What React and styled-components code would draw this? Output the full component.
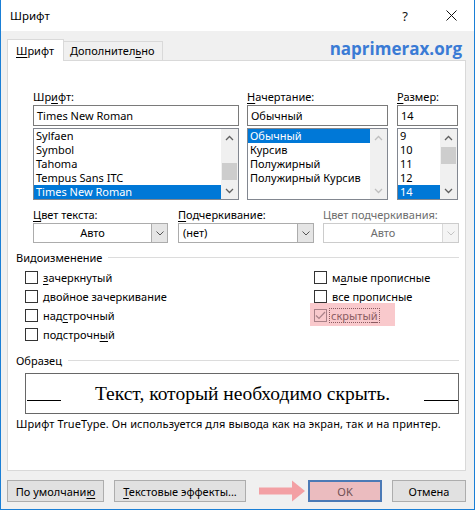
import React from 'react';
import styled, { createGlobalStyle, css } from 'styled-components';

const GlobalStyle = createGlobalStyle`
  html, body {
    margin: 0;
    padding: 0;
    background: #fff;
  }
  body {
    font-family: 'Noto Sans', 'Liberation Sans', sans-serif;
    font-size: 11px;
    color: #000;
  }
  * {
    box-sizing: border-box;
  }
`;

const Window = styled.div`
  width: 475px;
  height: 510px;
  display: flex;
  flex-direction: column;
  border: 1px solid #1a7fd6;
  border-top: none;
  background: #f0f0f0;
`;

const TitleBar = styled.div`
  flex: none;
  height: 31px;
  display: flex;
  align-items: center;
  padding-left: 9px;
  background: #fff;
  font-size: 11.5px;
`;

const Caption = styled.span`
  flex: 1;
`;

const CaptionButton = styled.span`
  width: 46px;
  height: 31px;
  display: flex;
  align-items: center;
  justify-content: center;
  font-size: 13px;
  color: #111;
`;

const Body = styled.div`
  flex: 1;
  display: flex;
  flex-direction: column;
  padding: 7px 8px 0 6px;
`;

const TabRow = styled.div`
  display: flex;
  align-items: flex-end;
  height: 22px;
`;

const Tab = styled.div`
  position: relative;
  border: 1px solid #d9d9d9;
  border-bottom: none;
  white-space: nowrap;
  ${({ $active }) =>
    $active
      ? css`
          z-index: 1;
          height: 22px;
          margin-bottom: -1px;
          padding: 2px 9px 0 8px;
          background: #fff;
        `
      : css`
          height: 19px;
          margin-left: -1px;
          padding: 0 7px 0 6px;
          background: #f0f0f0;
        `}
  line-height: 18px;
`;

const Watermark = styled.span`
  margin-left: auto;
  margin-right: 4px;
  align-self: center;
  font-family: 'Open Sans', 'Noto Sans', sans-serif;
  font-weight: 700;
  font-size: 17px;
  line-height: 20px;
  color: #3a7bd5;
`;

const Panel = styled.div`
  flex: none;
  height: 411px;
  display: flex;
  flex-direction: column;
  padding: 28px 6px 0 8px;
  background: #fff;
  border: 1px solid #d9d9d9;
`;

const Key = styled.u`
  text-decoration: underline;
  text-underline-offset: 2px;
`;

const FontGrid = styled.div`
  display: grid;
  grid-template-columns: 206px 141px 62px;
  column-gap: 8px;
  margin-left: 17px;
  & > :nth-child(3) {
    margin-left: 1px;
  }
`;

const Column = styled.div`
  display: flex;
  flex-direction: column;
`;

const Label = styled.label`
  display: block;
  line-height: 15px;
  margin-bottom: 1px;
  white-space: nowrap;
  color: ${({ $disabled }) => ($disabled ? '#6d6d6d' : '#000')};
`;

const Field = styled.div`
  height: 21px;
  padding: 0 3px;
  line-height: 19px;
  border: 1px solid #7a7a7a;
  background: #fff;
  white-space: nowrap;
`;

const ListBox = styled.div`
  display: flex;
  height: 72px;
  margin-top: 2px;
  border: 1px solid #828790;
  background: #fff;
`;

const Items = styled.div`
  flex: 1;
  overflow: hidden;
`;

const Item = styled.div`
  height: 14px;
  padding: 0 2px;
  line-height: 14px;
  white-space: nowrap;
  ${({ $selected }) =>
    $selected &&
    css`
      background: #0078d7;
      color: #fff;
    `}
`;

const ScrollBar = styled.div`
  flex: none;
  width: 17px;
  display: flex;
  flex-direction: column;
  background: #f0f0f0;
`;

const ScrollArrow = styled.div`
  height: 17px;
  display: flex;
  align-items: center;
  justify-content: center;
  color: ${({ $disabled }) => ($disabled ? '#bfbfbf' : '#606060')};
`;

const Track = styled.div`
  flex: 1;
`;

const Thumb = styled.div`
  height: 17px;
  margin: ${({ $offset }) => $offset}px 1px 0;
  background: #cdcdcd;
`;

const ComboRow = styled.div`
  display: grid;
  grid-template-columns: 135px 136px 135px;
  column-gap: 10px;
  margin: 7px 0 0 17px;
  & > :nth-child(3) {
    margin-left: -1px;
  }
`;

const Combo = styled.div`
  display: flex;
  height: 20px;
  border: 1px solid ${({ $disabled }) => ($disabled ? '#cccccc' : '#acacac')};
  background: #fff;
  color: ${({ $disabled }) => ($disabled ? '#6d6d6d' : '#000')};
`;

const ComboValue = styled.span`
  flex: 1;
  padding: 0 4px;
  line-height: 18px;
  text-align: ${({ $align }) => $align || 'left'};
`;

const ComboArrow = styled.span`
  width: 16px;
  display: flex;
  align-items: center;
  justify-content: center;
  border-left: 1px solid ${({ $disabled }) => ($disabled ? '#d9d9d9' : '#acacac')};
  background: ${({ $disabled }) => ($disabled ? '#f4f4f4' : '#e5e5e5')};
  color: ${({ $disabled }) => ($disabled ? '#c4c4c4' : '#555')};
`;

const GroupHeading = styled.div`
  display: flex;
  align-items: center;
  gap: 6px;
  margin-top: ${({ $top }) => $top}px;
  line-height: 15px;
  &::after {
    content: '';
    flex: 1;
    border-top: 1px solid #dcdcdc;
  }
`;

const Effects = styled.div`
  display: grid;
  grid-template-columns: 289px 1fr;
  margin-top: 3px;
  padding-left: 9px;
`;

const CheckRow = styled.div`
  display: flex;
  align-items: center;
  gap: 5px;
  height: 19px;
  white-space: nowrap;
  ${({ $marked }) =>
    $marked &&
    css`
      height: 23px;
      width: 85px;
      margin: -3px 0 -1px -4px;
      padding: 2px 0 0 4px;
      background: #f9c9cc;
      color: #8b5c62;
    `}
`;

const Box = styled.span`
  flex: none;
  width: 13px;
  height: 13px;
  display: flex;
  align-items: center;
  justify-content: center;
  border: 1px solid ${({ $marked }) => ($marked ? '#a98188' : '#333')};
  background: ${({ $marked }) => ($marked ? 'transparent' : '#fff')};
  color: #a98188;
`;

const FocusText = styled.span`
  margin-left: -3px;
  padding: 0 2px;
  line-height: 15px;
  outline: 1px dotted #8b5c62;
  outline-offset: -1px;
`;

const Preview = styled.div`
  display: grid;
  grid-template-columns: 35px 1fr 34px;
  height: 41px;
  margin: 5px 0 0 9px;
  border: 1px solid #676767;
`;

const Blank = styled.span`
  align-self: end;
  height: 1px;
  margin: 0 0 12px ${({ $left }) => ($left ? '1px' : '0')};
  background: #000;
`;

const SampleText = styled.span`
  align-self: center;
  text-align: center;
  font-family: 'Liberation Serif', 'Times New Roman', serif;
  font-size: 19.5px;
  line-height: 22px;
  white-space: nowrap;
`;

const Hint = styled.div`
  margin-top: 2px;
  line-height: 15px;
  white-space: nowrap;
  letter-spacing: 0.1px;
`;

const ButtonRow = styled.div`
  display: flex;
  align-items: center;
  margin-top: 9px;
`;

const Button = styled.button`
  height: 22px;
  width: ${({ $width }) => $width}px;
  margin-left: ${({ $gap }) => $gap || 0}px;
  padding: 0;
  font: inherit;
  color: #000;
  background: #e1e1e1;
  border: 1px solid #adadad;
  ${({ $default }) =>
    $default &&
    css`
      background: #ebbcbf;
      border: 2px solid #4b7ab6;
      color: #6f5053;
    `}
`;

const Spacer = styled.span`
  flex: 1;
`;

const Pointer = styled.svg`
  display: block;
  margin-right: 3px;
`;

const Chevron = ({ up }) => (
  <svg width="9" height="6" viewBox="0 0 9 6">
    <path
      d={up ? 'M1 5 L4.5 1.5 L8 5' : 'M1 1 L4.5 4.5 L8 1'}
      fill="none"
      stroke="currentColor"
      strokeWidth="1.3"
    />
  </svg>
);

const ComboChevron = () => (
  <svg width="8" height="5" viewBox="0 0 8 5">
    <path d="M0.5 0.5 L4 4 L7.5 0.5" fill="none" stroke="currentColor" strokeWidth="1" />
  </svg>
);

const List = ({ items, selected, thumb, disabled }) => (
  <ListBox>
    <Items>
      {items.map((name) => (
        <Item key={name} $selected={name === selected}>
          {name}
        </Item>
      ))}
    </Items>
    <ScrollBar>
      <ScrollArrow $disabled={disabled}>
        <Chevron up />
      </ScrollArrow>
      <Track>{thumb !== undefined && <Thumb $offset={thumb} />}</Track>
      <ScrollArrow $disabled={disabled}>
        <Chevron />
      </ScrollArrow>
    </ScrollBar>
  </ListBox>
);

const Dropdown = ({ value, align, disabled }) => (
  <Combo $disabled={disabled}>
    <ComboValue $align={align}>{value}</ComboValue>
    <ComboArrow $disabled={disabled}>
      <ComboChevron />
    </ComboArrow>
  </Combo>
);

const Check = ({ children }) => (
  <CheckRow>
    <Box />
    <span>{children}</span>
  </CheckRow>
);

const fonts = ['Sylfaen', 'Symbol', 'Tahoma', 'Tempus Sans ITC', 'Times New Roman'];
const styles = ['Обычный', 'Курсив', 'Полужирный', 'Полужирный Курсив'];
const sizes = ['9', '10', '11', '12', '14'];

const App = () => (
  <>
    <GlobalStyle />
    <Window>
      <TitleBar>
        <Caption>Шрифт</Caption>
        <CaptionButton>?</CaptionButton>
        <CaptionButton>
          <svg width="11" height="11" viewBox="0 0 11 11">
            <path d="M0.5 0.5 L10.5 10.5 M10.5 0.5 L0.5 10.5" stroke="#111" strokeWidth="1" />
          </svg>
        </CaptionButton>
      </TitleBar>

      <Body>
        <TabRow>
          <Tab $active>
            <Key>Ш</Key>рифт
          </Tab>
          <Tab>
            Дополнител<Key>ь</Key>но
          </Tab>
          <Watermark>naprimerax.org</Watermark>
        </TabRow>

        <Panel>
          <FontGrid>
            <Column>
              <Label>
                Шр<Key>и</Key>фт:
              </Label>
              <Field>Times New Roman</Field>
              <List items={fonts} selected="Times New Roman" thumb={17} />
            </Column>
            <Column>
              <Label>
                <Key>Н</Key>ачертание:
              </Label>
              <Field>Обычный</Field>
              <List items={styles} selected="Обычный" disabled />
            </Column>
            <Column>
              <Label>
                <Key>Р</Key>азмер:
              </Label>
              <Field>14</Field>
              <List items={sizes} selected="14" thumb={1} />
            </Column>
          </FontGrid>

          <ComboRow>
            <Column>
              <Label>
                <Key>Ц</Key>вет текста:
              </Label>
              <Dropdown value="Авто" align="center" />
            </Column>
            <Column>
              <Label>
                <Key>П</Key>одчеркивание:
              </Label>
              <Dropdown value="(нет)" />
            </Column>
            <Column>
              <Label $disabled>Цвет подчеркивания:</Label>
              <Dropdown value="Авто" align="center" disabled />
            </Column>
          </ComboRow>

          <GroupHeading $top={7}>Видоизменение</GroupHeading>
          <Effects>
            <Column>
              <Check>
                <Key>з</Key>ачеркнутый
              </Check>
              <Check>двойное зачеркивание</Check>
              <Check>
                над<Key>с</Key>трочный
              </Check>
              <Check>
                подстрочн<Key>ы</Key>й
              </Check>
            </Column>
            <Column>
              <Check>
                м<Key>а</Key>лые прописные
              </Check>
              <Check>
                <Key>в</Key>се прописные
              </Check>
              <CheckRow $marked>
                <Box $marked>
                  <svg width="11" height="9" viewBox="0 0 11 9">
                    <path d="M1 4.5 L4 7.5 L10 1" fill="none" stroke="currentColor" strokeWidth="1.2" />
                  </svg>
                </Box>
                <FocusText>
                  скрыты<Key>й</Key>
                </FocusText>
              </CheckRow>
            </Column>
          </Effects>

          <GroupHeading $top={9}>Образец</GroupHeading>
          <Preview>
            <Blank $left />
            <SampleText>Текст, который необходимо скрыть.</SampleText>
            <Blank />
          </Preview>
          <Hint>Шрифт TrueType. Он используется для вывода как на экран, так и на принтер.</Hint>
        </Panel>

        <ButtonRow>
          <Button $width={97}>
            По умолчани<Key>ю</Key>
          </Button>
          <Button $width={132} $gap={10}>
            <Key>Т</Key>екстовые эффекты...
          </Button>
          <Spacer />
          <Pointer width="46" height="22" viewBox="0 0 46 22">
            <rect x="0" y="7.5" width="34" height="7" fill="#f3a0a4" />
            <path d="M33 0.5 L46 11 L33 21.5 Z" fill="#f3a0a4" />
          </Pointer>
          <Button $width={74} $default>
            OK
          </Button>
          <Button $width={74} $gap={10}>
            Отмена
          </Button>
        </ButtonRow>
      </Body>
    </Window>
  </>
);

export default App;
